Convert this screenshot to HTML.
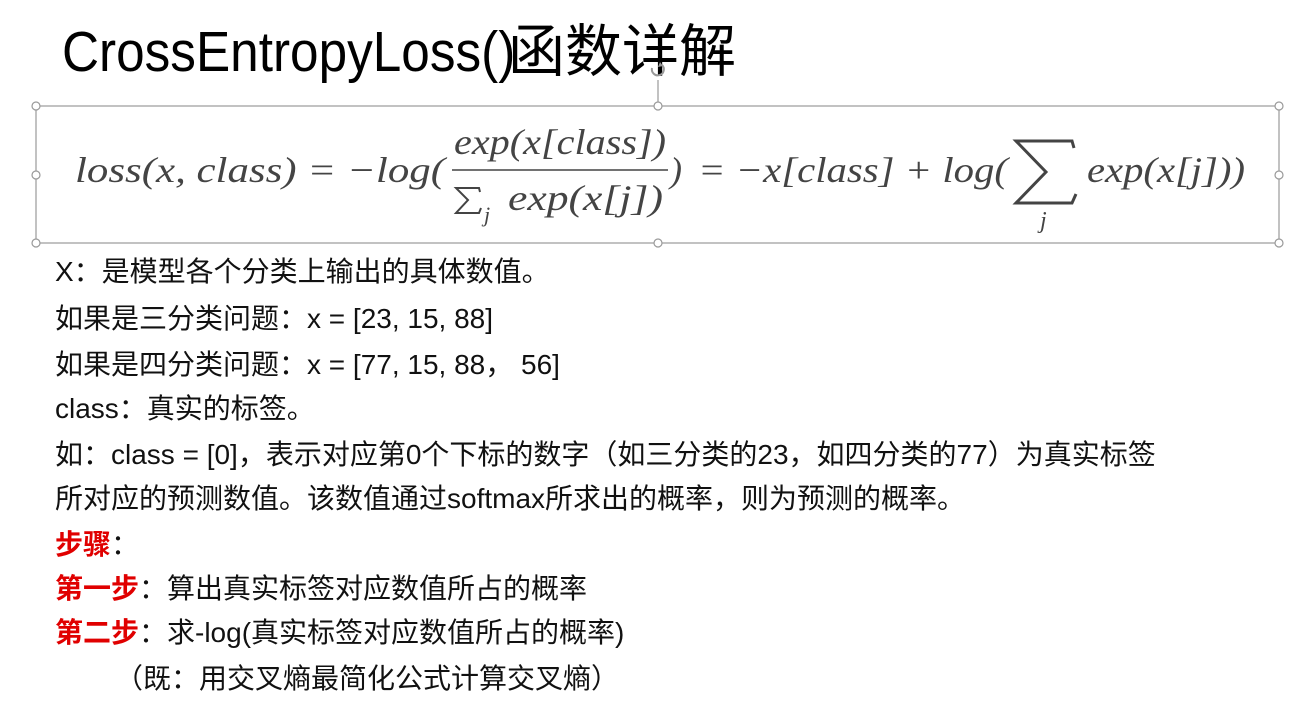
<!DOCTYPE html>
<html><head><meta charset="utf-8"><style>
html,body{margin:0;padding:0;background:#fff;width:1301px;height:723px;overflow:hidden;position:relative}
.t{position:absolute;left:62px;top:6px;font-family:"Liberation Sans","Noto Sans CJK SC",sans-serif;font-size:57px;color:#000;white-space:nowrap}
.t .l{display:inline-block;transform:scaleX(0.9);transform-origin:left;width:446px}
.t .c{font-size:57px}
.b{position:absolute;left:55px;font-family:"Liberation Sans","Noto Sans CJK SC",sans-serif;font-size:28px;line-height:32px;color:#111;white-space:nowrap}
.r{color:#e00000;font-weight:bold}
</style></head><body>
<div class="t"><span class="l">CrossEntropyLoss()</span><span class="c">函数详解</span></div>
<svg width="1301" height="723" style="position:absolute;left:0;top:0">
<g stroke="#999" stroke-width="1.2" fill="#fff">
<rect x="36" y="106" width="1243" height="137" fill="none"/>
<line x1="658" y1="80" x2="658" y2="106"/>
<circle cx="36" cy="106" r="4"/><circle cx="658" cy="106" r="4"/><circle cx="1279" cy="106" r="4"/>
<circle cx="36" cy="175" r="4"/><circle cx="1279" cy="175" r="4"/>
<circle cx="36" cy="243" r="4"/><circle cx="658" cy="243" r="4"/><circle cx="1279" cy="243" r="4"/>
</g>
<path d="M652 68 a6 6 0 1 0 10 -3" stroke="#999" stroke-width="2" fill="none"/>
<path d="M660 62 l3 4 l-5 1z" fill="#999"/>
<g font-family="Liberation Serif,serif" font-style="italic" font-size="36" fill="#444">
<text x="75" y="182" textLength="370" lengthAdjust="spacingAndGlyphs">loss(x, class) = −log(</text>
<text x="454" y="154" textLength="212" lengthAdjust="spacingAndGlyphs">exp(x[class])</text>
<text x="484" y="222" font-size="22">j</text>
<text x="508" y="210" textLength="155" lengthAdjust="spacingAndGlyphs">exp(x[j])</text>
<text x="670" y="182">)</text>
<text x="698" y="182" textLength="310" lengthAdjust="spacingAndGlyphs">= −x[class] + log(</text>
<text x="1040" y="228" font-size="24">j</text>
<text x="1087" y="182" textLength="158" lengthAdjust="spacingAndGlyphs">exp(x[j]))</text>
</g>
<path d="M480 192 L479 188 L456 188 L468 200 L456 213 L479 213 L481 208" stroke="#444" stroke-width="2" fill="none"/>
<path d="M1074 148 L1072 141 L1016 141 L1046 172 L1016 203 L1072 203 L1076 194" stroke="#444" stroke-width="3" fill="none" stroke-linejoin="miter"/>
<line x1="452" y1="170" x2="668" y2="170" stroke="#444" stroke-width="1.5"/>
</svg>
<div class="b" style="top:256px">X：是模型各个分类上输出的具体数值。</div>
<div class="b" style="top:303px">如果是三分类问题：x = [23, 15, 88]</div>
<div class="b" style="top:349px">如果是四分类问题：x = [77, 15, 88， 56]</div>
<div class="b" style="top:393px">class：真实的标签。</div>
<div class="b" style="top:439px">如：class = [0]，表示对应第0个下标的数字（如三分类的23，如四分类的77）为真实标签</div>
<div class="b" style="top:483px">所对应的预测数值。该数值通过softmax所求出的概率，则为预测的概率。</div>
<div class="b" style="top:529px"><span class="r">步骤</span>：</div>
<div class="b" style="top:573px"><span class="r">第一步</span>：算出真实标签对应数值所占的概率</div>
<div class="b" style="top:617px"><span class="r">第二步</span>：求-log(真实标签对应数值所占的概率)</div>
<div class="b" style="top:663px;left:115px">（既：用交叉熵最简化公式计算交叉熵）</div>
</body></html>
